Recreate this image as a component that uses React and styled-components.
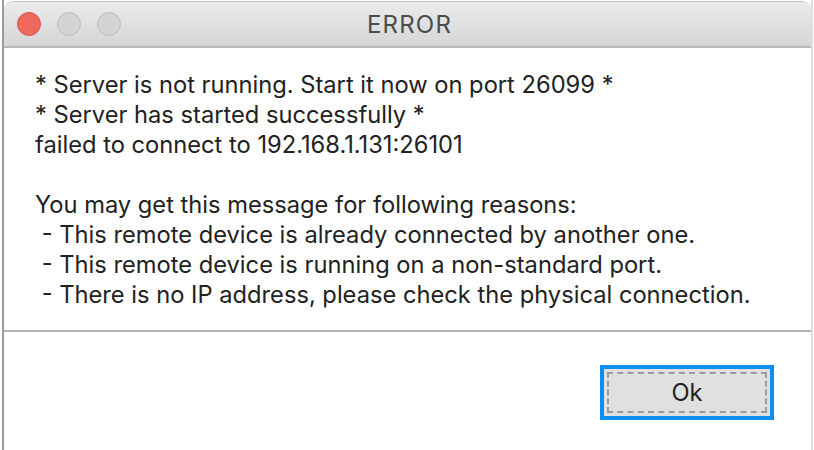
import styled, { createGlobalStyle } from 'styled-components';

const lines = [
  '* Server is not running. Start it now on port 26099 *',
  '* Server has started successfully *',
  'failed to connect to 192.168.1.131:26101',
  '',
  'You may get this message for following reasons:',
  ' - This remote device is already connected by another one.',
  ' - This remote device is running on a non-standard port.',
  ' - There is no IP address, please check the physical connection.',
];

export default function App() {
  return (
    <>
      <GlobalStyle />
      <Window>
        <TitleBar>
          <Lights>
            <Light $color="#ef6a5e" $border="#d65348" />
            <Light $color="#d4d4d4" $border="#bcbcbc" />
            <Light $color="#d4d4d4" $border="#bcbcbc" />
          </Lights>
          <Title>ERROR</Title>
        </TitleBar>
        <Message>
          {lines.map((l, i) => (
            <Line key={i}>{l || '\u00a0'}</Line>
          ))}
        </Message>
        <Separator />
        <Footer>
          <OkButton>
            <Focus>Ok</Focus>
          </OkButton>
        </Footer>
      </Window>
    </>
  );
}

const GlobalStyle = createGlobalStyle`
  html, body {
    margin: 0;
    padding: 0;
    background: #ffffff;
    overflow: hidden;
  }
  body {
    font-family: Inter, "Liberation Sans", sans-serif;
  }
`;

const Window = styled.div`
  margin-left: 2px;
  margin-right: 1px;
  height: 450px;
  box-sizing: border-box;
  border-left: 2px solid #9c9c9c;
  border-right: 2px solid #dedede;
  background: #fff;
  display: flex;
  flex-direction: column;
`;

const TitleBar = styled.div`
  position: relative;
  height: 44px;
  margin-top: 1px;
  border-top: 1px solid #c4c4c4;
  border-radius: 9px 9px 0 0;
  background: linear-gradient(#ebebeb, #d6d6d6);
  border-bottom: 2px solid #b9b9b9;
  display: flex;
  align-items: center;
  justify-content: center;
`;

const Lights = styled.div`
  position: absolute;
  left: 13px;
  top: 10px;
  display: flex;
  gap: 16px;
`;

const Light = styled.span`
  width: 22px;
  height: 22px;
  border-radius: 50%;
  background: ${(p) => p.$color};
  border: 1px solid ${(p) => p.$border};
`;

const Title = styled.div`
  font-size: 24px;
  letter-spacing: 1.2px;
  color: #4b4b4b;
  margin-left: 4px;
`;

const Message = styled.div`
  padding: 22px 0 0 31px;
  height: 260px;
`;

const Line = styled.div`
  font-size: 23.7px;
  line-height: 30px;
  color: #222;
  white-space: pre;
`;

const Separator = styled.div`
  height: 2px;
  background: #b2b2b2;
`;

const Footer = styled.div`
  display: flex;
  justify-content: flex-end;
  padding: 33px 37px 0 0;
`;

const OkButton = styled.button`
  width: 174px;
  height: 55px;
  box-sizing: border-box;
  border: 4px solid #0b8ef0;
  background: #e0e0e0;
  padding: 3px;
  margin: 0;
  display: flex;
`;

const Focus = styled.span`
  flex: 1;
  border: 2px dashed #9a9a9a;
  display: flex;
  align-items: center;
  justify-content: center;
  font-family: Inter, "Liberation Sans", sans-serif;
  font-size: 23.7px;
  color: #222;
`;
